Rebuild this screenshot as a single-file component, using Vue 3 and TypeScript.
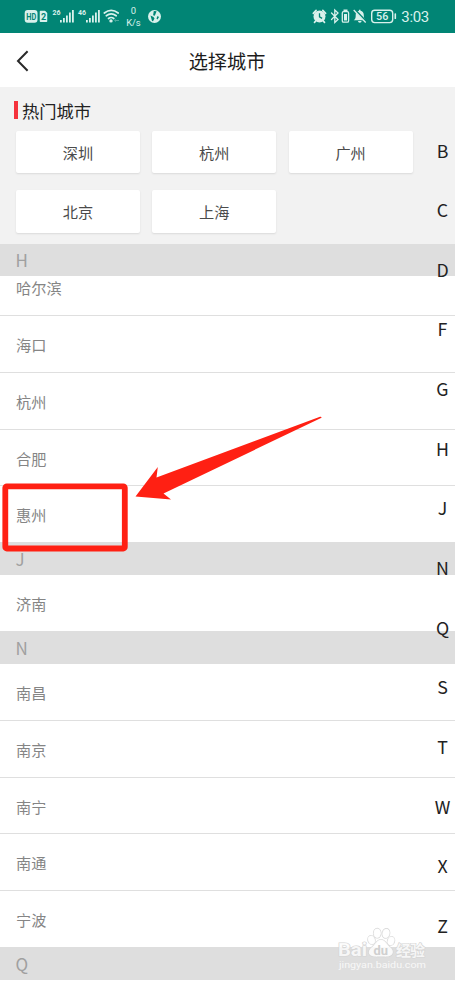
<script setup lang="ts">
interface Section {
  letter: string
  cities: string[]
}

const hotCities: string[] = ['深圳', '杭州', '广州', '北京', '上海']
const sections: Section[] = [
  { letter: 'H', cities: ['哈尔滨', '海口', '杭州', '合肥', '惠州'] },
  { letter: 'J', cities: ['济南'] },
  { letter: 'N', cities: ['南昌', '南京', '南宁', '南通', '宁波'] },
  { letter: 'Q', cities: [] },
]
const indexLetters: string[] = 'BCDFGHJNQSTWXZ'.split('')
</script>

<template>
  <div class="screen">
    <div class="status">
      <svg class="status-icons" width="455" height="33" viewBox="0 0 455 33">
        <g fill="#d9f1ec">
          <rect x="24.700" y="10" width="12.800" height="12.800" rx="3" />
          <path d="M40.500 11.500h4.300l1.700 1.700v8h-6z" stroke="#d9f1ec" stroke-width="1.500" stroke-linejoin="round" />
          <path d="M60 20h1.800v2.500h-1.800zM63 18h1.800v4.500h-1.800zM66 15.500h1.800v7h-1.800zM69 12.500h1.800v10h-1.800zM72 10h1.800v12.500h-1.800z" />
          <path d="M86 20h1.800v2.500h-1.800zM89 18h1.800v4.500h-1.800zM92 15.500h1.800v7h-1.800zM95 12.500h1.800v10h-1.800zM98 10h1.800v12.500h-1.800z" />
          <circle cx="111" cy="20.900" r="1.700" />
          <path d="M114 20.500l2-1.500v1h3v1h-3v1z" opacity=".35" />
          <circle cx="154.500" cy="16.500" r="6.500" />
          <circle cx="319.500" cy="16.500" r="6" />
          <path d="M313.300 13.300l2.800-3M322.800 10.300l2.800 3M315.700 21l-1.200 1.300M323.300 21l1.200 1.300" stroke="#d9f1ec" stroke-width="1.700" stroke-linecap="round" />
          <path d="M343.500 9.500h4v1.500h-4z" />
          <path d="M344 14h3v6.500h-3z" />
          <path d="M353.700 20.300c2-1.500 2-3 2-5.300 0-2.600 1.300-4 3.300-4.300v-1h1.500v1c2.200.5 3.300 2 3.300 4.300 0 2.300.2 3.800 2 5.300zM358 21h3.600a1.800 1.800 0 0 1-3.600 0z" />
          <rect x="394.500" y="13.300" width="1.600" height="5.800" rx=".7" />
        </g>
        <g fill="none" stroke="#d9f1ec" stroke-width="1.700" stroke-linecap="round">
          <path d="M104.300 13q6.900-5.200 13.900 0M106.300 15.800q4.900-3.700 9.900 0M108.500 18.500q2.700-2 5.300 0" />
          <path d="M331.500 13l6.500 6.500-3.200 3v-12.500l3.200 3-6.500 6.500" stroke-width="1.300" />
          <rect x="342.300" y="11.700" width="6.300" height="10.500" rx="1.200" stroke-width="1.300" />
          <rect x="371.700" y="10.300" width="21" height="12.300" rx="3" stroke-width="1.400" />
        </g>
        <path d="M354.300 9.200l12.500 13" stroke="#018575" stroke-width="2" />
        <path d="M353.700 10l12 12.500" stroke="#d9f1ec" stroke-width="1.300" />
        <path d="M319.500 13.300v3.600l2.600 1.500" fill="none" stroke="#018575" stroke-width="1.300" />
        <path d="M153.800 11l2.800.3-.8 2-1 2.500-1.700-.5zM150.500 15.500l3 1.500 1 1.500-1.500 2.700-1-.3zM157.500 16l1.500 1-1.500 2.500-1-1z" fill="#018575" />
        <g class="glyphs">
          <text x="26.200" y="19.500" font-size="8.500" font-weight="700" fill="#018575" textLength="10" lengthAdjust="spacingAndGlyphs">HD</text>
          <text x="40.900" y="19.700" font-size="9" font-weight="700" fill="#018575">2</text>
          <text x="52.500" y="15.300" font-size="7.500" font-weight="700" textLength="8" lengthAdjust="spacingAndGlyphs">26</text>
          <text x="78" y="15.300" font-size="7.500" font-weight="700" textLength="8" lengthAdjust="spacingAndGlyphs">46</text>
          <text x="133.500" y="14" font-size="9.500" text-anchor="middle">0</text>
          <text x="133.500" y="26" font-size="9.500" text-anchor="middle" textLength="14.500">K/s</text>
          <text x="382.200" y="20.300" font-size="10.800" font-weight="500" text-anchor="middle">56</text>
          <text x="401.300" y="21.900" font-size="15" textLength="28">3:03</text>
        </g>
      </svg>
    </div>

    <header class="header">
      <svg class="back" width="14" height="22" viewBox="0 0 14 22">
        <path d="M11.600 1.200L2 11l9.600 9.700" fill="none" stroke="#292929" stroke-width="2" />
      </svg>
      <h1>选择城市</h1>
    </header>

    <section class="hot">
      <h2>热门城市</h2>
      <div class="hot-grid">
        <button v-for="city in hotCities" :key="city">{{ city }}</button>
      </div>
    </section>

    <main class="list">
      <section v-for="section in sections" :key="section.letter" class="group">
        <h3>{{ section.letter }}</h3>
        <div v-for="city in section.cities" :key="city" class="city">{{ city }}</div>
      </section>
    </main>

    <nav class="index">
      <span v-for="letter in indexLetters" :key="letter">{{ letter }}</span>
    </nav>

    <svg class="marks" width="455" height="982" viewBox="0 0 455 982">
      <rect x="5.300" y="486.300" width="119.500" height="62.200" rx="1.500" fill="none" stroke="#ff2013" stroke-width="5.800" stroke-linejoin="round" />
      <path d="M135.500 496.600L157.800 467 156.500 477.600 320 416.800Q322.500 416.500 321 418L163.500 493.500 171 499.500Z" fill="#ff2013" />
    </svg>

    <svg class="watermark" width="110" height="50" viewBox="0 0 110 50">
      <g fill="#fff" fill-opacity=".8" stroke="#d5d5d5" stroke-width="1.200" paint-order="stroke">
        <ellipse cx="37.500" cy="17" rx="3.500" ry="4.500" transform="rotate(-20 37.500 17)" />
        <ellipse cx="43.200" cy="10.200" rx="3.700" ry="4.800" />
        <ellipse cx="52" cy="10.400" rx="3.700" ry="4.800" transform="rotate(12 52 10.400)" />
        <ellipse cx="57" cy="18" rx="3.500" ry="4.500" transform="rotate(20 57 18)" />
        <path d="M47 16.500c4 0 5 4 9 7.500 5 4 3 9 -2 9.500-3 .3-4 0-7 0s-4 .3-7 0c-6-.5-7-5.500-2-9.500 4-3.500 5-7.500 9-7.500z" />
        <text x="4" y="32.500" font-size="17.500" font-weight="700" textLength="29" lengthAdjust="spacingAndGlyphs">Bai</text>
        <text x="62" y="32.500" font-size="15" font-weight="700" textLength="29" class="cjk">经验</text>
      </g>
      <text x="39.500" y="31.500" font-size="13" font-weight="700" fill="#cfcfcf" textLength="14.500" lengthAdjust="spacingAndGlyphs">du</text>
      <text x="5" y="45" font-size="9.500" fill="#fff" fill-opacity=".8" textLength="87" lengthAdjust="spacingAndGlyphs">jingyan.baidu.com</text>
    </svg>
  </div>
</template>

<style>
body {
  margin: 0;
  background: #fff;
}
</style>

<style scoped>
.screen {
  position: relative;
  width: 455px;
  height: 982px;
  overflow: hidden;
  background: #fff;
  font-family: Roboto, "Noto Sans CJK SC", sans-serif;
}

h1,
h2,
h3 {
  margin: 0;
  font-weight: 400;
}

.status {
  height: 33px;
  background: #018575;
}

.status-icons,
.marks {
  display: block;
}

.glyphs {
  fill: #d9f1ec;
}

.header {
  display: grid;
  grid-template-columns: 40px 1fr 40px;
  align-items: center;
  height: 54px;
}

.back {
  margin: 1px 0 0 16px;
}

h1 {
  font-size: 19.2px;
  line-height: 48px;
  text-align: center;
  color: #1c1c1c;
  padding: 6px 1px 0 0;
}

.hot {
  box-sizing: border-box;
  height: 157px;
  padding: 14px 42px 0 14px;
  background: #f2f2f2;
}

h2 {
  box-sizing: border-box;
  display: flex;
  align-items: center;
  height: 18px;
  border-left: 4px solid #f5333d;
  padding: 4px 0 0 4px;
  font-size: 17.300px;
  line-height: 20px;
  color: #222;
}

.hot-grid {
  display: grid;
  grid-template-columns: repeat(3, 124px);
  column-gap: 12.300px;
  row-gap: 17.300px;
  padding: 11.700px 0 0 2px;
}

.hot-grid button {
  height: 42.300px;
  padding: 0;
  border: 0;
  border-radius: 2px;
  background: #fff;
  box-shadow: 0 1px 2px rgb(0 0 0 / 10%);
  font: inherit;
  font-size: 15.200px;
  color: #4b4b4b;
}

.group h3 {
  box-sizing: border-box;
  height: 33.200px;
  padding: 0 0 0 15.500px;
  background: #dedede;
  font-family: "Noto Sans CJK SC", sans-serif;
  font-size: 17px;
  line-height: 33px;
  color: #a0a0a0;
}

.group:first-child h3 {
  height: 32px;
  line-height: 32px;
}

.city {
  box-sizing: border-box;
  height: 56.700px;
  padding: 1px 0 0 16px;
  border-bottom: 1px solid #dfdfdf;
  font-size: 15.200px;
  line-height: 58px;
  color: #858585;
}

.city:last-child {
  height: 55.700px;
  border-bottom: 0;
}

/* The first row is partly scrolled beneath its section heading. */
.group:first-child .city:nth-child(2) {
  height: 40.400px;
  padding-top: 0;
  line-height: 27px;
}

.index {
  position: absolute;
  top: 119.500px;
  right: 0;
  display: flex;
  flex-direction: column;
  width: 25px;
}

.index span {
  height: 59.650px;
  line-height: 60px;
  text-align: center;
  font-family: "Noto Sans CJK SC", sans-serif;
  font-size: 17.800px;
  color: #222;
}

.marks {
  position: absolute;
  top: 0;
  left: 0;
  pointer-events: none;
}

.watermark {
  position: absolute;
  top: 923px;
  left: 334px;
  font-family: Roboto, sans-serif;
}

.cjk {
  font-family: "Noto Sans CJK SC", sans-serif;
}
</style>
